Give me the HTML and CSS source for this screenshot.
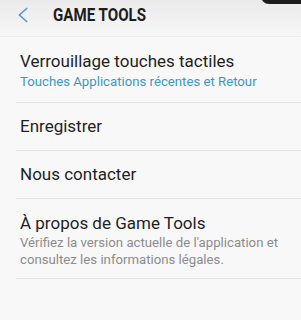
FILE: index.html
```html
<!DOCTYPE html>
<html lang="fr">
<head>
<meta charset="utf-8">
<link rel="stylesheet" href="styles.css">
</head>
<body>
<div class="screen">
  <div class="notch"></div>
  <header class="appbar">
    <svg class="back" width="10" height="16" viewBox="0 0 10 16"><path d="M9.2 1 L1.4 8 L9.2 15" fill="none" stroke="#4a9ac4" stroke-width="1.5"/></svg>
    <h1 class="title">GAME TOOLS</h1>
  </header>
  <ul class="list">
    <li class="item">
      <div class="item-title">Verrouillage touches tactiles</div>
      <div class="item-sub accent">Touches Applications récentes et Retour</div>
    </li>
    <li class="item single">
      <div class="item-title">Enregistrer</div>
    </li>
    <li class="item single">
      <div class="item-title">Nous contacter</div>
    </li>
    <li class="item">
      <div class="item-title">À propos de Game Tools</div>
      <div class="item-sub muted">Vérifiez la version actuelle de l'application et consultez les informations légales.</div>
    </li>
  </ul>
</div>
</body>
</html>
```

FILE: styles.css
```css
html, body {
  margin: 0;
  padding: 0;
  background: #f8f8f8;
}
.screen {
  position: relative;
  width: 301px;
  height: 320px;
  overflow: hidden;
  background: #f8f8f8;
  font-family: Roboto, "Liberation Sans", sans-serif;
}
.notch {
  position: absolute;
  top: -10px;
  right: -10px;
  width: 50px;
  height: 14px;
  background: #1c1c1c;
  border-radius: 0 0 0 8px;
}
.appbar {
  height: 37px;
  box-sizing: border-box;
  display: flex;
  align-items: center;
  padding: 0 0 7px 18px;
  background: linear-gradient(#eaeaea, #f7f7f7);
  border-bottom: 1px solid #eeeeee;
}
.back {
  display: block;
}
.title {
  margin: 0 0 0 25px;
  font-size: 18px;
  font-weight: 700;
  letter-spacing: 0;
  color: #1d1d1d;
  transform: scaleX(0.84);
  transform-origin: left center;
  white-space: nowrap;
}
.list {
  list-style: none;
  margin: 0;
  padding: 0 0 0 16px;
}
.item {
  padding: 13px 12px 12px 4px;
  border-bottom: 1px solid #e4e4e4;
}
.item.single {
  height: 47px;
  padding-top: 0;
  padding-bottom: 0;
  display: flex;
  align-items: center;
  box-sizing: content-box;
}
.item-title {
  font-size: 17px;
  line-height: 23px;
  color: #1f1f1f;
}
.item-sub {
  font-size: 13.2px;
  line-height: 17px;
}
.accent {
  color: #3c98bd;
}
.muted {
  color: #8c8c8c;
  line-height: 16.5px;
}
.item:last-child {
  padding-bottom: 10px;
}
```
